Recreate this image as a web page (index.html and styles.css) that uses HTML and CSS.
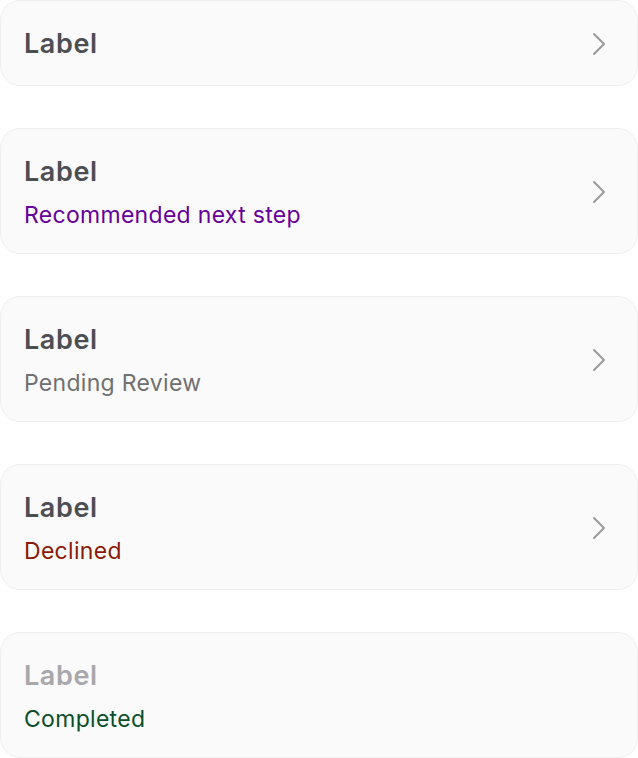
FILE: index.html
```html
<!DOCTYPE html>
<html lang="en">

<head>
    <meta charset="UTF-8">
    <meta name="viewport" content="width=device-width, initial-scale=1.0">
    <title>Status list</title>
    <link rel="stylesheet" href="styles.css">
</head>

<body>
    <div class="lista">
        <!-- simple row -->
        <a class="item" href="#">
            <div class="item-texto">
                <span class="item-label">Label</span>
            </div>
            <svg class="seta" viewBox="0 0 14 24" width="14" height="24"><path d="M2 2 L12 12 L2 22" /></svg>
        </a>

        <a class="item" href="#">
            <div class="item-texto">
                <span class="item-label">Label</span>
                <span class="item-status recomendado">Recommended next step</span>
            </div>
            <svg class="seta" viewBox="0 0 14 24" width="14" height="24"><path d="M2 2 L12 12 L2 22" /></svg>
        </a>

        <a class="item" href="#">
            <div class="item-texto">
                <span class="item-label">Label</span>
                <span class="item-status pendente">Pending Review</span>
            </div>
            <svg class="seta" viewBox="0 0 14 24" width="14" height="24"><path d="M2 2 L12 12 L2 22" /></svg>
        </a>

        <a class="item" href="#">
            <div class="item-texto">
                <span class="item-label">Label</span>
                <span class="item-status recusado">Declined</span>
            </div>
            <svg class="seta" viewBox="0 0 14 24" width="14" height="24"><path d="M2 2 L12 12 L2 22" /></svg>
        </a>

        <!-- completed rows have no arrow -->
        <div class="item desativado">
            <div class="item-texto">
                <span class="item-label">Label</span>
                <span class="item-status concluido">Completed</span>
            </div>
        </div>
    </div>
</body>

</html>
```

FILE: styles.css
```css
body {
    margin: 0;
    padding: 0;
    background-color: #ffffff;
    font-family: Inter, "Noto Sans", sans-serif;
}

.lista {
    display: flex;
    flex-direction: column;
    gap: 42px;
    width: 638px;
}

.item {
    display: flex;
    align-items: center;
    justify-content: space-between;
    box-sizing: border-box;
    padding: 24px 31px 22px 23px;
    background-color: #fafafa;
    border: 1px solid #efefef;
    border-radius: 20px;
    text-decoration: none;
}

.item-texto {
    display: flex;
    flex-direction: column;
    gap: 8px;
}

.item-label {
    font-size: 27px;
    line-height: 38px;
    font-weight: 600;
    letter-spacing: 0.6px;
    color: #4d4d52;
}

.item-status {
    font-size: 23px;
    line-height: 32px;
    letter-spacing: 0.3px;
}

.recomendado {
    color: #660099;
}

.pendente {
    color: #707070;
}

.recusado {
    color: #8a1a05;
}

.concluido {
    color: #0a4f2a;
}

.desativado .item-label {
    color: #a8a8ac;
}

.seta {
    fill: none;
    stroke: #9a9a9a;
    stroke-width: 2;
    stroke-linecap: round;
    stroke-linejoin: round;
}
```
